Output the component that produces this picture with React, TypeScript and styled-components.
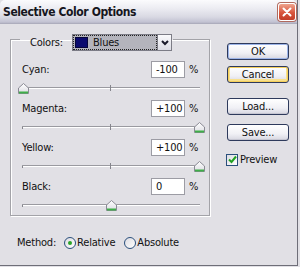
import styled, { createGlobalStyle } from "styled-components";

const GlobalStyle = createGlobalStyle`
  html, body {
    margin: 0;
    padding: 0;
    background: #e1e0e5;
  }
  body {
    font-family: "DejaVu Sans Condensed", "Liberation Sans Narrow", "Liberation Sans", sans-serif;
    font-size: 11px;
    letter-spacing: -0.2px;
    color: #111;
  }
`;

const channels = [
  { name: "Cyan:", value: "-100", pos: -100 },
  { name: "Magenta:", value: "+100", pos: 100 },
  { name: "Yellow:", value: "+100", pos: 100 },
  { name: "Black:", value: "0", pos: 0 },
];

const Thumb = () => (
  <svg width="11" height="11" viewBox="0 0 11 11">
    <defs>
      <linearGradient id="tg" x1="0" y1="0" x2="0" y2="1">
        <stop offset="0" stopColor="#ffffff" />
        <stop offset="1" stopColor="#dcdce2" />
      </linearGradient>
    </defs>
    <path d="M0.5 5 L5.5 0.5 L10.5 5 L10.5 10.5 L0.5 10.5 Z" fill="url(#tg)" stroke="#8a8a94" />
    <path d="M1 9.5 H10" stroke="#3fae49" strokeWidth="2" />
  </svg>
);

const CloseIcon = () => (
  <svg width="10" height="10" viewBox="0 0 10 10">
    <path d="M1.5 1.5 L8.5 8.5 M8.5 1.5 L1.5 8.5" stroke="#fff" strokeWidth="2" strokeLinecap="round" />
  </svg>
);

const Chevron = () => (
  <svg width="8" height="6" viewBox="0 0 8 6">
    <path d="M1 1 L4 4 L7 1" stroke="#1a1a2a" strokeWidth="2" fill="none" />
  </svg>
);

const Check = () => (
  <svg width="9" height="9" viewBox="0 0 9 9">
    <path d="M1 4.5 L3.5 7 L8 1.5" stroke="#21a121" strokeWidth="2" fill="none" />
  </svg>
);

export default function App() {
  return (
    <>
      <GlobalStyle />
      <Window>
        <TitleBar>
          <Title>Selective Color Options</Title>
          <CloseButton>
            <CloseIcon />
          </CloseButton>
        </TitleBar>
        <Body>
          <LeftColumn>
            <Group>
              <Legend>
                <LegendLabel>Colors:</LegendLabel>
                <Combo>
                  <ComboField>
                    <Swatch />
                    <span>Blues</span>
                  </ComboField>
                  <ComboArrow>
                    <Chevron />
                  </ComboArrow>
                </Combo>
              </Legend>
              {channels.map((c, i) => (
                <Channel key={c.name} $last={i === channels.length - 1}>
                  <InputRow>
                    <ChannelLabel>{c.name}</ChannelLabel>
                    <ValueBox>{c.value}</ValueBox>
                    <Pct>%</Pct>
                  </InputRow>
                  <SliderBox>
                    <Track />
                    <Tick $x={0} />
                    <Tick $x={88} $tall />
                    <ThumbWrap style={{ left: (c.pos + 100) / 200 * 176 - 4 }}>
                      <Thumb />
                    </ThumbWrap>
                  </SliderBox>
                </Channel>
              ))}
            </Group>
            <MethodRow>
              <span>Method:</span>
              <RadioOption $gap={8}>
                <Radio $on />
                <span>Relative</span>
              </RadioOption>
              <RadioOption $gap={9}>
                <Radio />
                <span>Absolute</span>
              </RadioOption>
            </MethodRow>
          </LeftColumn>
          <RightColumn>
            <Button $kind="default">OK</Button>
            <Button $kind="hot" $mt={6}>Cancel</Button>
            <Button $mt={15}>Load...</Button>
            <Button $mt={9}>Save...</Button>
            <CheckRow>
              <CheckBox>
                <Check />
              </CheckBox>
              <span>Preview</span>
            </CheckRow>
          </RightColumn>
        </Body>
      </Window>
    </>
  );
}

const Window = styled.div`
  width: 298px;
  height: 266px;
  box-sizing: border-box;
  display: flex;
  flex-direction: column;
  background: #e1e0e5;
  border-right: 1px solid #6e6e78;
  border-bottom: 1px solid #6e6e78;
`;

const TitleBar = styled.div`
  height: 24px;
  flex: none;
  display: flex;
  align-items: center;
  justify-content: space-between;
  padding: 0 0 0 3px;
  background: linear-gradient(#fbfbfd 0%, #ececf2 35%, #d9d9e3 70%, #c2c2d2 92%, #a6a6b6 100%);
  border-radius: 5px 5px 0 0;
  box-sizing: border-box;
`;

const Title = styled.div`
  font-weight: bold;
  font-size: 12px;
  letter-spacing: -0.4px;
  color: #161620;
`;

const CloseButton = styled.div`
  width: 18px;
  height: 18px;
  box-sizing: border-box;
  margin-right: 1px;
  border-radius: 3px;
  border: 1px solid #fff;
  box-shadow: 0 0 0 1px #b06a5e;
  background: linear-gradient(#efa48e, #d8553d 55%, #c23d28);
  display: flex;
  align-items: center;
  justify-content: center;
`;

const Body = styled.div`
  flex: 1;
  display: flex;
  padding: 4px 0 0 10px;
`;

const LeftColumn = styled.div`
  width: 200px;
  display: flex;
  flex-direction: column;
`;

const Group = styled.fieldset`
  margin: 0;
  min-width: 0;
  padding: 10px 8px 0 11px;
  border: 1px solid #a3a3a8;
  box-shadow: 1px 1px 0 #fff, inset 1px 1px 0 #fff;
`;

const Legend = styled.legend`
  margin-left: -2px;
  padding: 6px 1px 0 10px;
  display: flex;
  align-items: center;
  gap: 12px;
`;

const LegendLabel = styled.span`
  width: 30px;
`;

const Combo = styled.div`
  display: flex;
  height: 17px;
`;

const ComboField = styled.div`
  width: 86px;
  box-sizing: border-box;
  border: 1px solid #7c7c86;
  background: #b4b4bc;
  outline: 1px dotted #222;
  outline-offset: -2px;
  display: flex;
  align-items: center;
  gap: 5px;
  padding-left: 2px;
`;

const Swatch = styled.div`
  width: 13px;
  height: 11px;
  background: #0a0a6e;
  border: 1px solid #06063a;
  box-sizing: border-box;
`;

const ComboArrow = styled.div`
  width: 14px;
  box-sizing: border-box;
  border: 1px solid #7c7c86;
  border-left: none;
  background: linear-gradient(#fafafc, #dcdce4);
  display: flex;
  align-items: center;
  justify-content: center;
`;

const Channel = styled.div<{ $last?: boolean }>`
  margin-bottom: ${(p) => (p.$last ? 0 : 2)}px;
`;

const InputRow = styled.div`
  height: 17px;
  display: flex;
  align-items: center;
`;

const ChannelLabel = styled.span`
  flex: 1;
`;

const ValueBox = styled.div`
  width: 34px;
  height: 17px;
  box-sizing: border-box;
  border: 1px solid #9c9ca4;
  background: #fff;
  padding: 1px 0 0 4px;
  line-height: 14px;
`;

const Pct = styled.span`
  width: 12px;
  margin-left: 4px;
`;

const SliderBox = styled.div`
  position: relative;
  height: 20px;
  padding-top: 9px;
  box-sizing: border-box;
`;

const Track = styled.div`
  width: 178px;
  height: 2px;
  box-sizing: border-box;
  border-top: 1px solid #9a9aa0;
  background: #fff;
`;

const Tick = styled.div<{ $x: number; $tall?: boolean }>`
  position: absolute;
  left: ${(p) => p.$x}px;
  top: ${(p) => (p.$tall ? 7 : 10)}px;
  width: 1px;
  height: ${(p) => (p.$tall ? 6 : 2)}px;
  background: #85858c;
`;

const ThumbWrap = styled.div`
  position: absolute;
  top: 5px;
  width: 11px;
  height: 11px;
  line-height: 0;
`;

const MethodRow = styled.div`
  margin-top: 18px;
  padding-left: 7px;
  height: 17px;
  display: flex;
  align-items: center;
`;

const RadioOption = styled.div<{ $gap: number }>`
  margin-left: ${(p) => p.$gap}px;
  display: flex;
  align-items: center;
  gap: 1px;
`;

const Radio = styled.div<{ $on?: boolean }>`
  width: 12px;
  height: 12px;
  box-sizing: border-box;
  border-radius: 50%;
  border: 1px solid #2a4f7c;
  background: linear-gradient(135deg, #dcdce2, #ffffff);
  display: flex;
  align-items: center;
  justify-content: center;
  &::after {
    content: "";
    display: ${(p) => (p.$on ? "block" : "none")};
    width: 4px;
    height: 4px;
    border-radius: 50%;
    background: #2aa52a;
  }
`;

const RightColumn = styled.div`
  margin-left: 17px;
  padding-top: 15px;
  width: 62px;
  display: flex;
  flex-direction: column;
`;

const Button = styled.div<{ $kind?: "default" | "hot"; $mt?: number }>`
  margin-top: ${(p) => p.$mt ?? 0}px;
  height: 17px;
  box-sizing: border-box;
  border: 1px solid #2e3a5c;
  border-radius: 3px;
  background: linear-gradient(#ffffff, #f0f0f5 60%, #d6d6e0);
  display: flex;
  align-items: center;
  justify-content: center;
  box-shadow: ${(p) =>
    p.$kind === "default"
      ? "inset 0 0 0 1px #9cb4e8"
      : p.$kind === "hot"
      ? "inset 0 0 0 1px #f4cf5c, inset 0 -1px 0 2px #f8e08e"
      : "inset 0 -1px 0 #c6c6d2"};
`;

const CheckRow = styled.div`
  margin-top: 12px;
  margin-left: -1px;
  display: flex;
  align-items: center;
  gap: 2px;
`;

const CheckBox = styled.div`
  width: 12px;
  height: 12px;
  box-sizing: border-box;
  border: 1px solid #2a4f7c;
  background: linear-gradient(135deg, #dcdce2, #ffffff);
  display: flex;
  align-items: center;
  justify-content: center;
`;
